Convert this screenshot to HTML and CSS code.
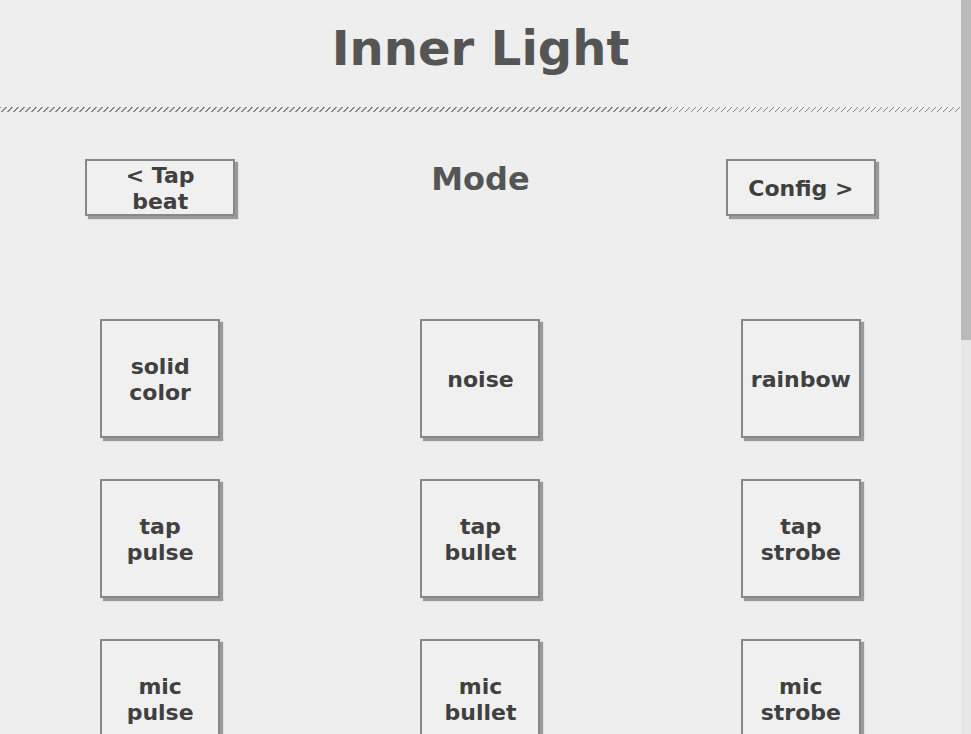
FILE: index.html
```html
<!DOCTYPE html>
<html lang="en">
<head>
<meta charset="utf-8">
<title>Inner Light</title>
<link rel="stylesheet" href="styles.css">
</head>
<body>
<div class="app">
  <header class="header">
    <h1 class="title">Inner Light</h1>
    <div class="hatch"></div>
  </header>
  <main class="page">
    <nav class="nav">
      <div class="nav-cell"><button class="btn btn-nav">&lt; Tap beat</button></div>
      <div class="nav-cell"><h2 class="section-title">Mode</h2></div>
      <div class="nav-cell"><button class="btn btn-nav">Config &gt;</button></div>
    </nav>
    <section class="modes">
      <button class="btn btn-mode">solid color</button>
      <button class="btn btn-mode">noise</button>
      <button class="btn btn-mode">rainbow</button>
      <button class="btn btn-mode">tap pulse</button>
      <button class="btn btn-mode">tap bullet</button>
      <button class="btn btn-mode">tap strobe</button>
      <button class="btn btn-mode">mic pulse</button>
      <button class="btn btn-mode">mic bullet</button>
      <button class="btn btn-mode">mic strobe</button>
    </section>
  </main>
</div>
<div class="scrollbar" aria-hidden="true">
  <div class="scrollbar-thumb"></div>
</div>
</body>
</html>
```
FILE: styles.css
```css
html, body {
  margin: 0;
  height: 100%;
  overflow: hidden;
  background: #eeeeee;
}
body {
  display: flex;
  font-family: "DejaVu Sans", "Liberation Sans", sans-serif;
  font-weight: bold;
  color: #555555;
}
.app {
  flex: 1;
  min-width: 0;
  height: 100vh;
  overflow: hidden;
}
.scrollbar {
  flex: 0 0 10px;
  height: 100vh;
  background: #e6e6e6;
}
.scrollbar-thumb {
  height: 340px;
  background: #bababa;
}
.header {
  padding-top: 20px;
}
.title {
  margin: 0;
  font-size: 48px;
  line-height: 56px;
  text-align: center;
  color: #555555;
}
.hatch {
  margin-top: 31px;
  height: 5px;
  background: repeating-linear-gradient(135deg, #858585 0 1px, transparent 1px 4.24px);
}
.page {
  padding-top: 47px;
}
.nav {
  display: grid;
  grid-template-columns: repeat(3, 1fr);
  align-items: start;
}
.nav-cell {
  display: flex;
  justify-content: center;
}
.section-title {
  margin: 2px 0 0;
  font-size: 32px;
  line-height: 37px;
  color: #555555;
}
.btn {
  box-sizing: border-box;
  font-family: "DejaVu Sans", "Liberation Sans", sans-serif;
  font-weight: bold;
  font-size: 22px;
  line-height: 26px;
  color: #404040;
  background: #f0f0f0;
  border: 2px solid #888888;
  box-shadow: 3px 3px 1px #9a9a9a;
  border-radius: 0;
  margin: 0;
  display: flex;
  align-items: center;
  justify-content: center;
  text-align: center;
}
.btn-nav {
  width: 150px;
  height: 57px;
  padding: 2px 10px 0;
}
.modes {
  margin-top: 103px;
  display: grid;
  grid-template-columns: repeat(3, 1fr);
  row-gap: 41px;
  justify-items: center;
}
.btn-mode {
  width: 120px;
  height: 119px;
  padding: 2px 4px 0;
}
```
